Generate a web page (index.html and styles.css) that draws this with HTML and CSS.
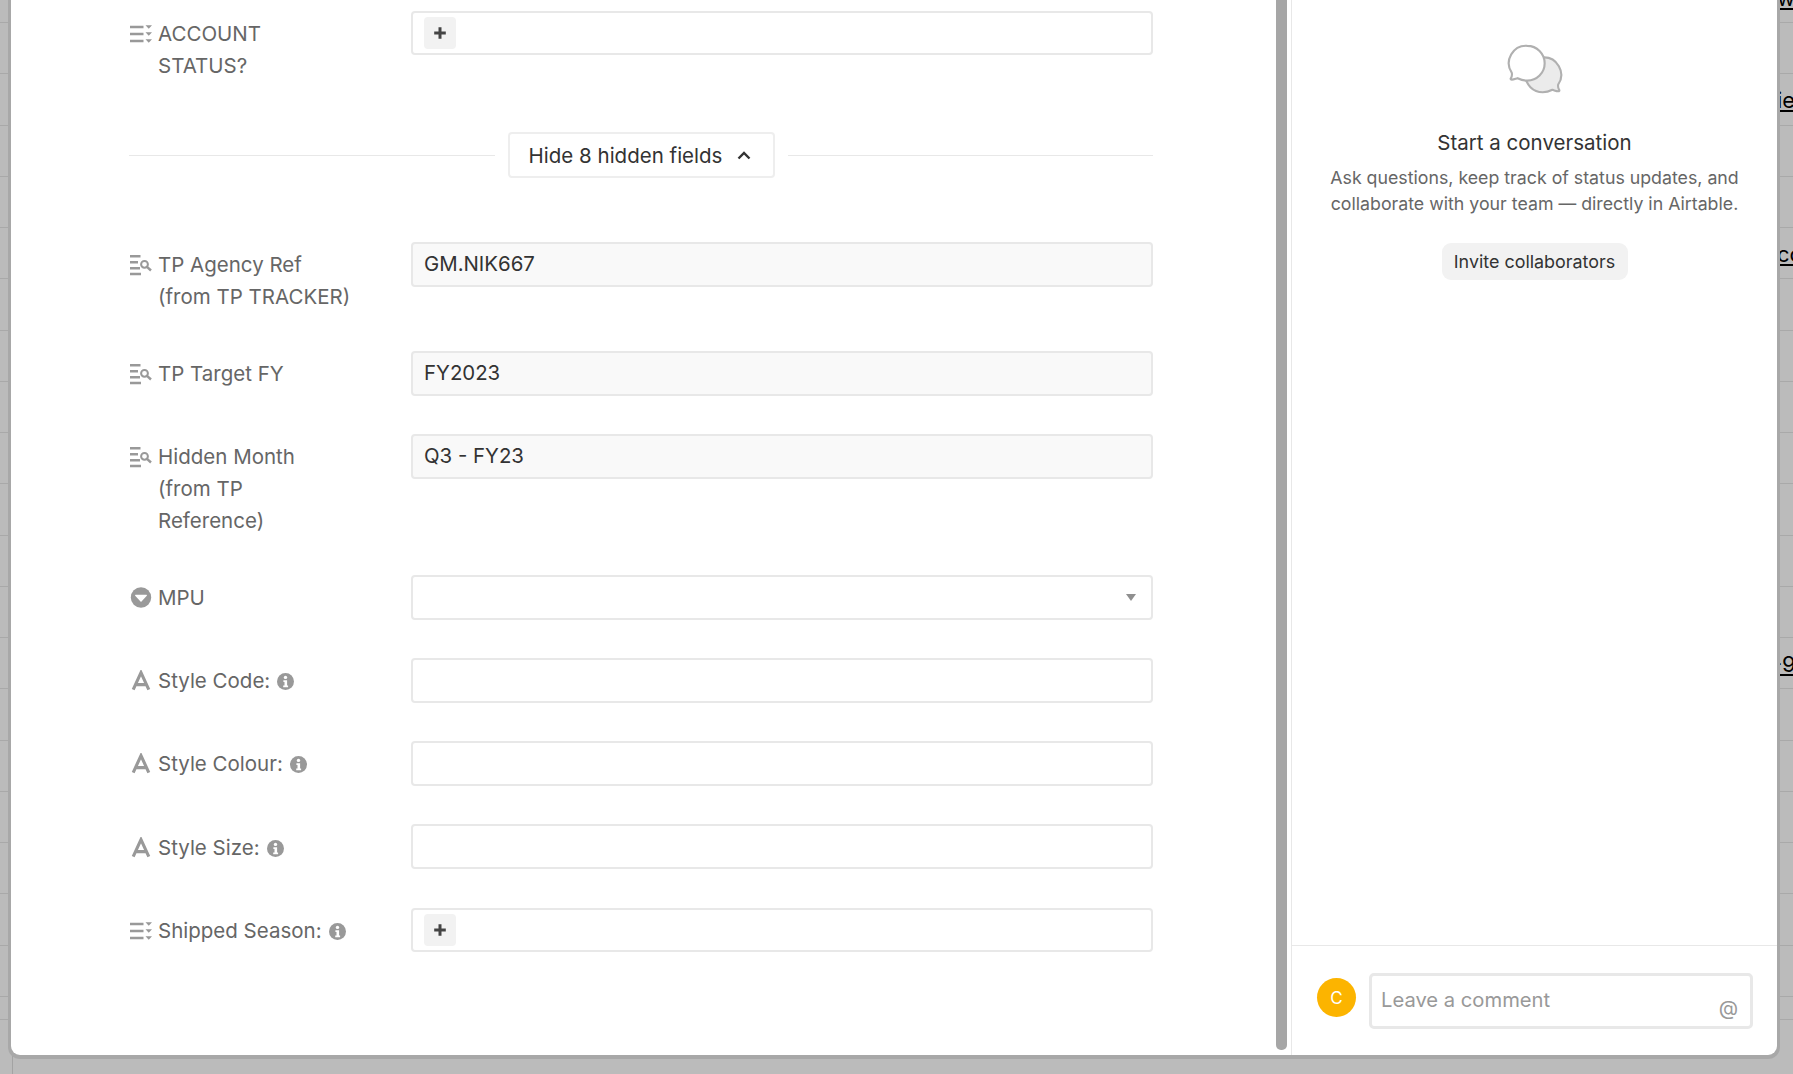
FILE: index.html
```html
<!DOCTYPE html>
<html lang="en">
<head>
<meta charset="utf-8">
<title>Record</title>
<link rel="stylesheet" href="styles.css">
</head>
<body>
<svg class="defs" width="0" height="0" aria-hidden="true">
  <defs>
    <symbol id="i-multi" viewBox="0 0 22 22">
      <path d="M0 3.900h13.500M0 11h13.500M0 18.100h13.500" stroke="currentColor" stroke-width="2.500" fill="none"/>
      <path d="M15.500 2.200h6.500l-3.250 3.600zM15.500 9.200h6.500l-3.250 3.600zM15.500 16.200h6.500l-3.250 3.600z" fill="currentColor"/>
    </symbol>
    <symbol id="i-lookup" viewBox="0 0 22 22">
      <path d="M0 2.200h10.500M0 8.200h8M0 14.200h10M0 19.900h11" stroke="currentColor" stroke-width="2.500" fill="none"/>
      <circle cx="14.500" cy="10.300" r="3.400" stroke="currentColor" stroke-width="2" fill="none"/>
      <path d="M17 12.800l4 3.700" stroke="currentColor" stroke-width="2.400" fill="none"/>
    </symbol>
    <symbol id="i-text" viewBox="0 0 22 22">
      <path d="M3.200 19.600L11 2.600l7.800 17M6 14.600h10" stroke="currentColor" stroke-width="3.100" fill="none"/>
    </symbol>
    <symbol id="i-select" viewBox="0 0 22 22">
      <circle cx="11" cy="10.500" r="10.200" fill="currentColor"/>
      <path d="M5.600 7.700h10.800a.6.6 0 0 1 .4 1l-5.300 5.800a.7.7 0 0 1-1 0L5.200 8.700a.6.6 0 0 1 .4-1z" fill="#fff"/>
    </symbol>
    <symbol id="i-info" viewBox="0 0 17 17">
      <circle cx="8.500" cy="8.500" r="8.500" fill="currentColor"/>
      <circle cx="8.500" cy="4.400" r="1.700" fill="#fff"/>
      <path d="M6.400 7.200h3.700v5.200h1v1.800H6.200v-1.800h1.300V9H6.400z" fill="#fff"/>
    </symbol>
    <symbol id="i-plus" viewBox="0 0 14 14">
      <path d="M7 1.200v11.600M1.200 7h11.600" stroke="currentColor" stroke-width="3" fill="none"/>
    </symbol>
  </defs>
</svg>

<div class="grid-bg">
  <div class="bg-row bg-row-first"><span class="bg-link">w</span></div>
  <div class="bg-row"></div>
  <div class="bg-row"><span class="bg-link">ie</span></div>
  <div class="bg-row"></div>
  <div class="bg-row"></div>
  <div class="bg-row"><span class="bg-link">cc</span></div>
  <div class="bg-row"></div>
  <div class="bg-row"></div>
  <div class="bg-row"></div>
  <div class="bg-row"></div>
  <div class="bg-row"></div>
  <div class="bg-row"></div>
  <div class="bg-row"></div>
  <div class="bg-row"><span class="bg-link bg-link-shift">-9</span></div>
  <div class="bg-row"></div>
  <div class="bg-row"></div>
  <div class="bg-row"></div>
  <div class="bg-row"></div>
  <div class="bg-row"></div>
  <div class="bg-row"></div>
  <div class="bg-row bg-row-short"></div>
  <div class="bg-summary"><div class="bg-summary-cell"></div></div>
</div>

<div class="modal">
  <main class="record">
    <div class="field field-tall">
      <div class="label"><svg class="ficon"><use href="#i-multi"/></svg><span>ACCOUNT<br>STATUS?</span></div>
      <div class="input input-multi"><span class="add"><svg class="plus"><use href="#i-plus"/></svg></span></div>
    </div>

    <div class="divider">
      <span class="divider-line divider-line-left"></span>
      <button class="toggle" type="button">Hide 8 hidden fields
        <svg class="chev" viewBox="0 0 14 9"><path d="M1.500 7.500L7 2l5.500 5.500" stroke="currentColor" stroke-width="2.400" fill="none"/></svg>
      </button>
      <span class="divider-line"></span>
    </div>

    <div class="fields">
      <div class="field field-tall">
        <div class="label"><svg class="ficon"><use href="#i-lookup"/></svg><span>TP Agency Ref<br>(from TP TRACKER)</span></div>
        <div class="input input-filled">GM.NIK667</div>
      </div>
      <div class="field">
        <div class="label"><svg class="ficon"><use href="#i-lookup"/></svg><span>TP Target FY</span></div>
        <div class="input input-filled">FY2023</div>
      </div>
      <div class="field field-taller">
        <div class="label"><svg class="ficon"><use href="#i-lookup"/></svg><span>Hidden Month<br>(from TP<br>Reference)</span></div>
        <div class="input input-filled">Q3 - FY23</div>
      </div>
      <div class="field">
        <div class="label"><svg class="ficon"><use href="#i-select"/></svg><span>MPU</span></div>
        <div class="input input-select"><svg class="caret" viewBox="0 0 10 7"><path d="M0 0h10L5 7z" fill="currentColor"/></svg></div>
      </div>
      <div class="field">
        <div class="label"><svg class="ficon"><use href="#i-text"/></svg><span>Style Code:</span><svg class="info"><use href="#i-info"/></svg></div>
        <div class="input"></div>
      </div>
      <div class="field">
        <div class="label"><svg class="ficon"><use href="#i-text"/></svg><span>Style Colour:</span><svg class="info"><use href="#i-info"/></svg></div>
        <div class="input"></div>
      </div>
      <div class="field">
        <div class="label label-drop"><svg class="ficon"><use href="#i-text"/></svg><span>Style Size:</span><svg class="info"><use href="#i-info"/></svg></div>
        <div class="input"></div>
      </div>
      <div class="field field-last">
        <div class="label"><svg class="ficon"><use href="#i-multi"/></svg><span>Shipped Season:</span><svg class="info"><use href="#i-info"/></svg></div>
        <div class="input input-multi"><span class="add"><svg class="plus"><use href="#i-plus"/></svg></span></div>
      </div>
    </div>
    <div class="scrollbar"></div>
  </main>

  <aside class="comments">
    <div class="empty">
      <svg class="bubbles" viewBox="0 0 60 60">
        <path d="M38 17a18 18 0 1 0 0 36c4 0 7-1 10-2.500 2 .5 4 1.500 6 1.500 1 0 1.500-.7 1-1.500-1-1.500-1.500-3-1-5.500A18 18 0 0 0 38 17z" fill="#ebebeb" stroke="#b0b0b0" stroke-width="2.200"/>
        <path d="M22 5a18 18 0 1 1 0 36c-4 0-7-1-10-2.500-2 .5-4 1.500-6 1.500-1 0-1.500-.7-1-1.500 1-1.500 1.500-3 1-5.500A18 18 0 0 1 22 5z" fill="#fff" stroke="#b0b0b0" stroke-width="2.200"/>
      </svg>
      <h2 class="empty-title">Start a conversation</h2>
      <p class="empty-text">Ask questions, keep track of status updates, and<br>collaborate with your team — directly in Airtable.</p>
      <button class="invite" type="button">Invite collaborators</button>
    </div>
    <div class="composer">
      <div class="avatar">C</div>
      <div class="comment-box">
        <span class="placeholder">Leave a comment</span>
        <span class="at">@</span>
      </div>
    </div>
  </aside>
</div>
</body>
</html>
```

FILE: styles.css
```css
* { box-sizing: border-box; }

html, body {
  margin: 0;
  height: 100%;
  overflow: hidden;
}

body {
  position: relative;
  background: #bbbbbb;
  font-family: Inter, "Liberation Sans", sans-serif;
  color: #333333;
}

.defs { position: absolute; }

/* Dimmed grid behind the dialog */
.grid-bg {
  display: flex;
  flex-direction: column;
  height: 100%;
  overflow: hidden;
}

.bg-row {
  flex: none;
  height: 51.25px;
  border-bottom: 1px solid #a9a9a9;
  display: flex;
  align-items: center;
  padding: 2px 0 0 1777px;
  overflow: hidden;
  font-size: 22px;
  color: #000;
}

.bg-row-first { margin-top: -28.25px; }
.bg-row-short { height: 23px; }
.bg-link { text-decoration: underline; white-space: nowrap; }
.bg-link-shift { margin-left: -5px; }
.bg-summary { flex: 1; }
.bg-summary-cell { width: 13px; height: 100%; border-right: 1px solid #a3a3a3; }

/* Dialog */
.modal {
  position: absolute;
  left: 11px;
  top: -10px;
  width: 1766px;
  height: 1065px;
  display: flex;
  background: #fff;
  border-radius: 9px;
  box-shadow: 0 1px 0 3px #a8a8a8;
}

.record {
  position: relative;
  width: 1280px;
  flex: none;
  padding: 21px 0 0 119px;
}

.scrollbar {
  position: absolute;
  left: 1265px;
  top: 0;
  bottom: 5px;
  width: 11px;
  background: #a6a6a6;
  border-radius: 0 0 5px 5px;
}

.field {
  display: flex;
  align-items: flex-start;
  width: 1023px;
  min-height: 45px;
}

.field-tall { min-height: 71px; }
.field-taller { min-height: 103px; }
.field-last { margin-top: 1px; }

.label {
  flex: none;
  width: 281px;
  display: flex;
  align-items: flex-start;
  font-size: 20.5px;
  line-height: 32px;
  color: #666666;
  padding-top: 7px;
}

.label-drop { padding-top: 8px; }

.ficon {
  flex: none;
  width: 22px;
  height: 22px;
  margin: 5px 6px 0 0;
  color: #999999;
}

.info {
  flex: none;
  width: 17px;
  height: 17px;
  margin: 8px 0 0 7px;
  color: #999999;
}

.input {
  width: 742px;
  height: 45px;
  flex: none;
  display: flex;
  align-items: center;
  padding: 0 11px 2px;
  border: 2px solid #e8e8e8;
  border-radius: 4px;
  background: #fff;
  font-size: 20.4px;
  color: #333333;
}

.input-filled { background: #f9f9f9; }
.input-multi { height: 44px; padding-bottom: 0; }
.input-select { justify-content: flex-end; padding: 0 15px 0 11px; }

.caret { width: 10px; height: 7px; color: #8f8f8f; }

.add {
  display: flex;
  align-items: center;
  justify-content: center;
  width: 32px;
  height: 32px;
  border-radius: 4px;
  background: #f2f2f2;
}

.plus { width: 14px; height: 14px; color: #444444; }

.divider {
  display: flex;
  align-items: center;
  width: 1024px;
  margin: 50px 0 64px -1px;
  gap: 13px;
}

.divider-line {
  flex: 1;
  height: 1px;
  background: #e8e8e8;
}

.divider-line-left { flex: none; width: 366px; }

.toggle {
  flex: none;
  width: 267px;
  height: 46px;
  display: flex;
  align-items: center;
  justify-content: center;
  gap: 15px;
  padding: 0 3px 0 0;
  border: 2px solid #eeeeee;
  border-radius: 4px;
  background: #fff;
  font-family: inherit;
  font-size: 20.5px;
  color: #333333;
}

.chev { width: 14px; height: 9px; }

.fields {
  display: flex;
  flex-direction: column;
  gap: 38px;
}

/* Comments column */
.comments {
  flex: 1;
  display: flex;
  flex-direction: column;
  border-left: 1px solid #e8e8e8;
}

.empty {
  flex: 1;
  display: flex;
  flex-direction: column;
  align-items: center;
  padding-top: 51px;
}

.bubbles { width: 58px; height: 58px; display: block; }

.empty-title {
  margin: 29px 0 0;
  font-size: 20.500px;
  font-weight: 400;
  line-height: 30px;
  color: #333333;
}

.empty-text {
  margin: 7px 0 0;
  font-size: 17.750px;
  line-height: 26px;
  color: #666666;
  text-align: center;
}

.invite {
  margin-top: 26px;
  width: 186px;
  height: 37px;
  padding: 0;
  border: 0;
  border-radius: 9px;
  background: #f2f2f2;
  font-family: inherit;
  font-size: 17.900px;
  color: #333333;
}

.composer {
  flex: none;
  height: 110px;
  display: flex;
  align-items: flex-start;
  padding: 27px 24px 0 25px;
  border-top: 1px solid #e8e8e8;
}

.avatar {
  flex: none;
  width: 39px;
  height: 39px;
  margin: 5px 13px 0 0;
  border-radius: 50%;
  background: #fcb400;
  color: #fff;
  font-size: 17px;
  display: flex;
  align-items: center;
  justify-content: center;
}

.comment-box {
  flex: 1;
  position: relative;
  height: 56px;
  padding: 11px 9px;
  border: 3px solid #e8e8e8;
  border-radius: 5px;
  font-size: 20.200px;
  line-height: 26px;
}

.placeholder { color: #999999; }

.at {
  position: absolute;
  right: 12px;
  bottom: 5px;
  font-size: 20px;
  color: #999999;
}
```
